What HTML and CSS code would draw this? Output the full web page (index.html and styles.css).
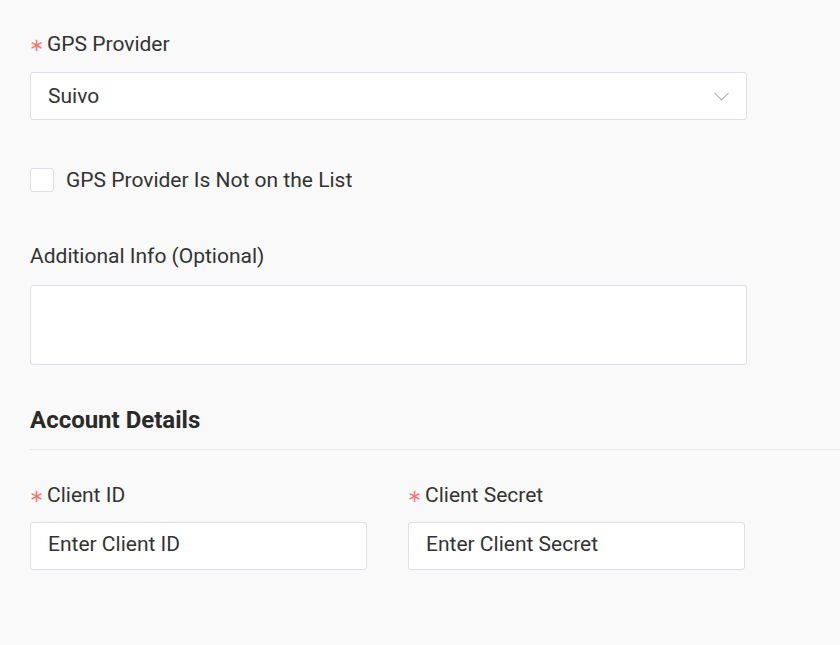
FILE: index.html
```html
<!DOCTYPE html>
<html>
<head>
<meta charset="utf-8">
<link rel="stylesheet" href="styles.css">
</head>
<body>
<div class="form">
  <div class="label"><span class="req">∗</span>GPS Provider</div>
  <div class="select">
    <span class="value">Suivo</span>
    <svg class="chev" width="15" height="9" viewBox="0 0 15 9"><path d="M0.5 0.8 L7.5 8 L14.5 0.8" fill="none" stroke="#b4b4b4" stroke-width="1.1"/></svg>
  </div>
  <label class="check-row">
    <span class="checkbox"></span>
    <span class="check-text">GPS Provider Is Not on the List</span>
  </label>
  <div class="label label-info">Additional Info (Optional)</div>
  <div class="textarea"></div>
  <div class="section">
    <h2 class="section-title">Account Details</h2>
  </div>
  <div class="row">
    <div class="col">
      <div class="label"><span class="req">∗</span>Client ID</div>
      <div class="input">Enter Client ID</div>
    </div>
    <div class="col">
      <div class="label"><span class="req">∗</span>Client Secret</div>
      <div class="input">Enter Client Secret</div>
    </div>
  </div>
</div>
</body>
</html>
```
FILE: styles.css
```css
* { box-sizing: border-box; }
html, body { margin: 0; padding: 0; background: #f9f9f9; }
body {
  font-family: Roboto, "Liberation Sans", sans-serif;
  color: #333333;
  width: 840px;
  height: 645px;
  overflow: hidden;
}
.form { padding: 32px 0 0 30px; }
.label {
  font-size: 21px;
  line-height: 24px;
  margin-bottom: 16px;
  display: flex;
  align-items: center;
}
.req {
  color: #f77676;
  font-family: "DejaVu Sans", sans-serif;
  font-size: 18px;
  width: 17px;
  transform: translate(-1px, 1px);
}
.select {
  width: 717px;
  height: 48px;
  background: #fff;
  border: 1px solid #dcdfe6;
  border-radius: 3px;
  display: flex;
  align-items: center;
  justify-content: space-between;
  padding: 0 17px 0 17px;
  font-size: 21px;
}
.chev { display: block; margin-top: 0; }
.check-row {
  margin-top: 48px;
  display: flex;
  align-items: center;
  height: 24px;
}
.checkbox {
  width: 24px;
  height: 24px;
  background: #fff;
  border: 1px solid #dcdfe6;
  border-radius: 3px;
}
.check-text { margin-left: 12px; font-size: 21px; }
.label-info { margin-top: 52px; margin-bottom: 17px; }
.textarea {
  width: 717px;
  height: 80px;
  background: #fff;
  border: 1px solid #dcdfe6;
  border-radius: 3px;
}
.section {
  margin-top: 41px;
  border-bottom: 1px solid #e8e8e8;
  padding-bottom: 15px;
}
.section-title {
  margin: 0;
  font-size: 24px;
  line-height: 28px;
  font-weight: 700;
  color: #2a2a2a;
}
.row { display: flex; gap: 41px; margin-top: 33px; }
.col { width: 337px; }
.col .label { margin-bottom: 15px; }
.input {
  height: 48px;
  background: #fff;
  border: 1px solid #dcdfe6;
  border-radius: 3px;
  padding: 0 17px 4px;
  display: flex;
  align-items: center;
  font-size: 21px;
  color: #333;
}
```
